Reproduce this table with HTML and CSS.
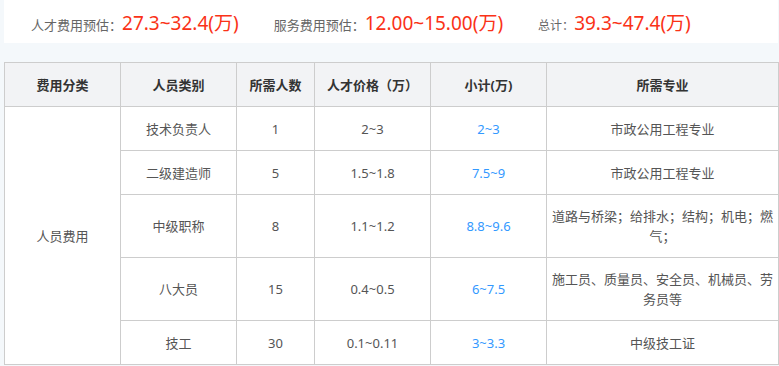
FILE: index.html
```html
<!DOCTYPE html>
<html lang="zh-CN">
<head>
<meta charset="utf-8">
<title>费用预估</title>
<link rel="stylesheet" href="styles.css">
</head>
<body>
<div class="page">
  <div class="summary">
    <div class="item"><span class="label">人才费用预估：</span><span class="value">27.3~32.4(万)</span></div>
    <div class="item"><span class="label">服务费用预估：</span><span class="value">12.00~15.00(万)</span></div>
    <div class="item"><span class="label small">总计：</span><span class="value">39.3~47.4(万)</span></div>
  </div>
  <table class="cost">
    <colgroup>
      <col class="c1"><col class="c2"><col class="c3"><col class="c4"><col class="c5"><col class="c6">
    </colgroup>
    <thead>
      <tr>
        <th>费用分类</th>
        <th>人员类别</th>
        <th>所需人数</th>
        <th>人才价格（万）</th>
        <th>小计(万)</th>
        <th>所需专业</th>
      </tr>
    </thead>
    <tbody>
      <tr class="r1">
        <td rowspan="5">人员费用</td>
        <td>技术负责人</td>
        <td>1</td>
        <td>2~3</td>
        <td class="blue">2~3</td>
        <td class="major">市政公用工程专业</td>
      </tr>
      <tr class="r1">
        <td>二级建造师</td>
        <td>5</td>
        <td>1.5~1.8</td>
        <td class="blue">7.5~9</td>
        <td class="major">市政公用工程专业</td>
      </tr>
      <tr class="r2">
        <td>中级职称</td>
        <td>8</td>
        <td>1.1~1.2</td>
        <td class="blue">8.8~9.6</td>
        <td class="major">道路与桥梁；给排水；结构；机电；燃气；</td>
      </tr>
      <tr class="r2">
        <td>八大员</td>
        <td>15</td>
        <td>0.4~0.5</td>
        <td class="blue">6~7.5</td>
        <td class="major">施工员、质量员、安全员、机械员、劳务员等</td>
      </tr>
      <tr class="r1">
        <td>技工</td>
        <td>30</td>
        <td>0.1~0.11</td>
        <td class="blue">3~3.3</td>
        <td class="major">中级技工证</td>
      </tr>
    </tbody>
  </table>
</div>
</body>
</html>
```
FILE: styles.css
```css
html, body {
  margin: 0;
  padding: 0;
  background: #f4f8fb;
}
body {
  font-family: "Noto Sans", "Noto Sans CJK SC", sans-serif;
  color: #555;
}
.page {
  padding-left: 4px;
  width: 774px;
}
.summary {
  background: #fff;
  height: 43px;
  display: flex;
  align-items: center;
  padding-left: 27px;
  gap: 35px;
  box-sizing: border-box;
  margin-bottom: 19px;
}
.item {
  display: flex;
  align-items: baseline;
}
.label {
  font-size: 13px;
  color: #666;
}
.label.small {
  font-size: 12px;
}
.value {
  font-size: 19px;
  color: #fa3217;
}
.cost {
  width: 774px;
  table-layout: fixed;
  border-collapse: collapse;
  background: #fff;
  font-size: 13px;
}
.c1, .c2, .c4, .c5 { width: 116px; }
.c3 { width: 78px; }
.c6 { width: 232px; }
.cost th, .cost td {
  border: 1px solid #cdcdcd;
  text-align: center;
  padding: 0 4px;
  line-height: 20px;
}
.cost th {
  background: #f2f3f5;
  color: #333;
  font-weight: bold;
  height: 43px;
}
.r1 td { height: 43px; }
.r2 td { height: 62px; }
.cost td.blue { color: #3399ff; }
```
